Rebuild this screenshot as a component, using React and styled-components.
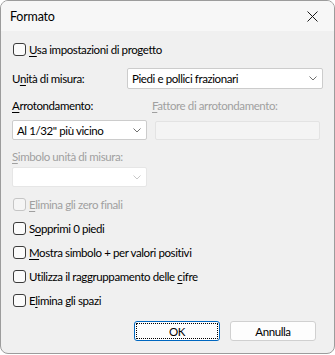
import styled, {createGlobalStyle} from 'styled-components';

const GlobalStyle = createGlobalStyle`
  html, body {
    margin: 0;
    padding: 0;
    background: #ffffff;
  }
  body {
    font-family: Lato, "Noto Sans", "Liberation Sans", sans-serif;
    font-size: 11.5px;
    letter-spacing: -0.4px;
    color: #000;
  }
`;

//Outer window frame with the rounded Windows 11 border
const Window = styled.div`
  box-sizing: border-box;
  width: 335px;
  height: 354px;
  border: 1px solid #9c9c9c;
  border-radius: 8px;
  background: #f0f0f0;
  overflow: hidden;
  display: flex;
  flex-direction: column;
`;

const TitleBar = styled.div`
  height: 30px;
  flex: none;
  display: flex;
  align-items: center;
  justify-content: space-between;
  padding: 0 16px 0 9px;
  background: #f7f7f7;
`;

const Title = styled.span`
  font-size: 12.5px;
  letter-spacing: -0.2px;
`;

const Body = styled.div`
  display: flex;
  flex-direction: column;
  padding: 10px 11px 0 11px;
`;

const Row = styled.div`
  display: flex;
  align-items: center;
  margin-top: ${({mt}) => mt || 0}px;
  gap: ${({gap}) => gap || 0}px;
`;

const Label = styled.span`
  width: ${({w}) => (w ? `${w}px` : 'auto')};
  flex: none;
  line-height: 16px;
  color: ${({disabled}) => (disabled ? '#a0a0a0' : '#000')};
  white-space: nowrap;
`;

const Key = styled.u`
  text-underline-offset: 2px;
`;

const Check = styled.label`
  display: flex;
  align-items: center;
  height: 16px;
  margin-top: ${({mt}) => mt || 0}px;
  color: ${({disabled}) => (disabled ? '#a0a0a0' : '#000')};
  white-space: nowrap;
`;

const Box = styled.span`
  box-sizing: border-box;
  width: 13px;
  height: 13px;
  margin: 0 3px 0 1px;
  border: 1px solid ${({disabled}) => (disabled ? '#c5c5c5' : '#3c3c3c')};
  border-radius: 3px;
  background: ${({disabled}) => (disabled ? '#f5f5f5' : '#fbfbfb')};
`;

const Combo = styled.div`
  box-sizing: border-box;
  width: ${({w}) => w}px;
  height: ${({h}) => h || 20}px;
  display: flex;
  align-items: center;
  justify-content: space-between;
  padding: 0 5px 0 4px;
  background: #fff;
  border: 1px solid ${({disabled}) => (disabled ? '#e6e6e6' : '#cccccc')};
  border-radius: 2px;
  white-space: nowrap;
`;

const TextBox = styled.div`
  box-sizing: border-box;
  width: ${({w}) => w}px;
  height: 19px;
  background: #f4f4f4;
  border: 1px solid #e3e3e3;
  border-radius: 2px;
`;

const Footer = styled.div`
  display: flex;
  justify-content: flex-end;
  gap: 10px;
  margin-top: 13px;
  padding-right: 7px;
`;

const Button = styled.button`
  box-sizing: border-box;
  width: 86px;
  height: 20px;
  padding: 0;
  font: inherit;
  letter-spacing: inherit;
  color: #000;
  background: #fdfdfd;
  border: 1px solid ${({primary}) => (primary ? '#0067c0' : '#d0d0d0')};
  border-radius: 3px;
  position: relative;
  display: flex;
  align-items: center;
  justify-content: center;
`;

//dotted focus rectangle drawn over the default button
const Focus = styled.span`
  position: absolute;
  inset: 1px;
  border: 1px dotted #000;
  border-radius: 1px;
`;

const Chevron = ({light}) => (
  <svg width="8" height="5" viewBox="0 0 8 5">
    <path d="M0.5 0.5 L4 4 L7.5 0.5" fill="none"
      stroke={light ? '#c8c8c8' : '#707070'} strokeWidth="1" />
  </svg>
);

const CloseIcon = () => (
  <svg width="11" height="11" viewBox="0 0 11 11">
    <path d="M0.5 0.5 L10.5 10.5 M10.5 0.5 L0.5 10.5" stroke="#1a1a1a" strokeWidth="1" />
  </svg>
);

const CheckItem = ({children, mt, disabled}) => (
  <Check mt={mt} disabled={disabled}>
    <Box disabled={disabled} />
    <span>{children}</span>
  </Check>
);

const App = () => (
  <>
    <GlobalStyle />
    <Window>
      <TitleBar>
        <Title>Formato</Title>
        <CloseIcon />
      </TitleBar>
      <Body>
        <CheckItem><Key>U</Key>sa impostazioni di progetto</CheckItem>

        <Row mt={11}>
          <Label w={115}>U<Key>n</Key>ità di misura:</Label>
          <Combo w={197} h={21}>
            <span>Piedi e pollici frazionari</span>
            <Chevron />
          </Combo>
        </Row>

        <Row mt={9}>
          <Label w={140}><Key>A</Key>rrotondamento:</Label>
          <Label disabled><Key>F</Key>attore di arrotondamento:</Label>
        </Row>
        <Row mt={6} gap={8}>
          <Combo w={135}>
            <span>Al 1/32" più vicino</span>
            <Chevron />
          </Combo>
          <TextBox w={165} />
        </Row>

        <Row mt={9}>
          <Label disabled><Key>S</Key>imbolo unità di misura:</Label>
        </Row>
        <Row mt={2}>
          <Combo w={135} disabled>
            <span />
            <Chevron light />
          </Combo>
        </Row>

        <CheckItem mt={9} disabled><Key>E</Key>limina gli zero finali</CheckItem>
        <CheckItem mt={8}>S<Key>o</Key>pprimi 0 piedi</CheckItem>
        <CheckItem mt={8}><Key>M</Key>ostra simbolo + per valori positivi</CheckItem>
        <CheckItem mt={8}>Utilizza il raggruppamento delle <Key>c</Key>ifre</CheckItem>
        <CheckItem mt={8}>E<Key>l</Key>imina gli spazi</CheckItem>

        <Footer>
          <Button primary>
            <Focus />
            OK
          </Button>
          <Button>Annulla</Button>
        </Footer>
      </Body>
    </Window>
  </>
);

export default App;
